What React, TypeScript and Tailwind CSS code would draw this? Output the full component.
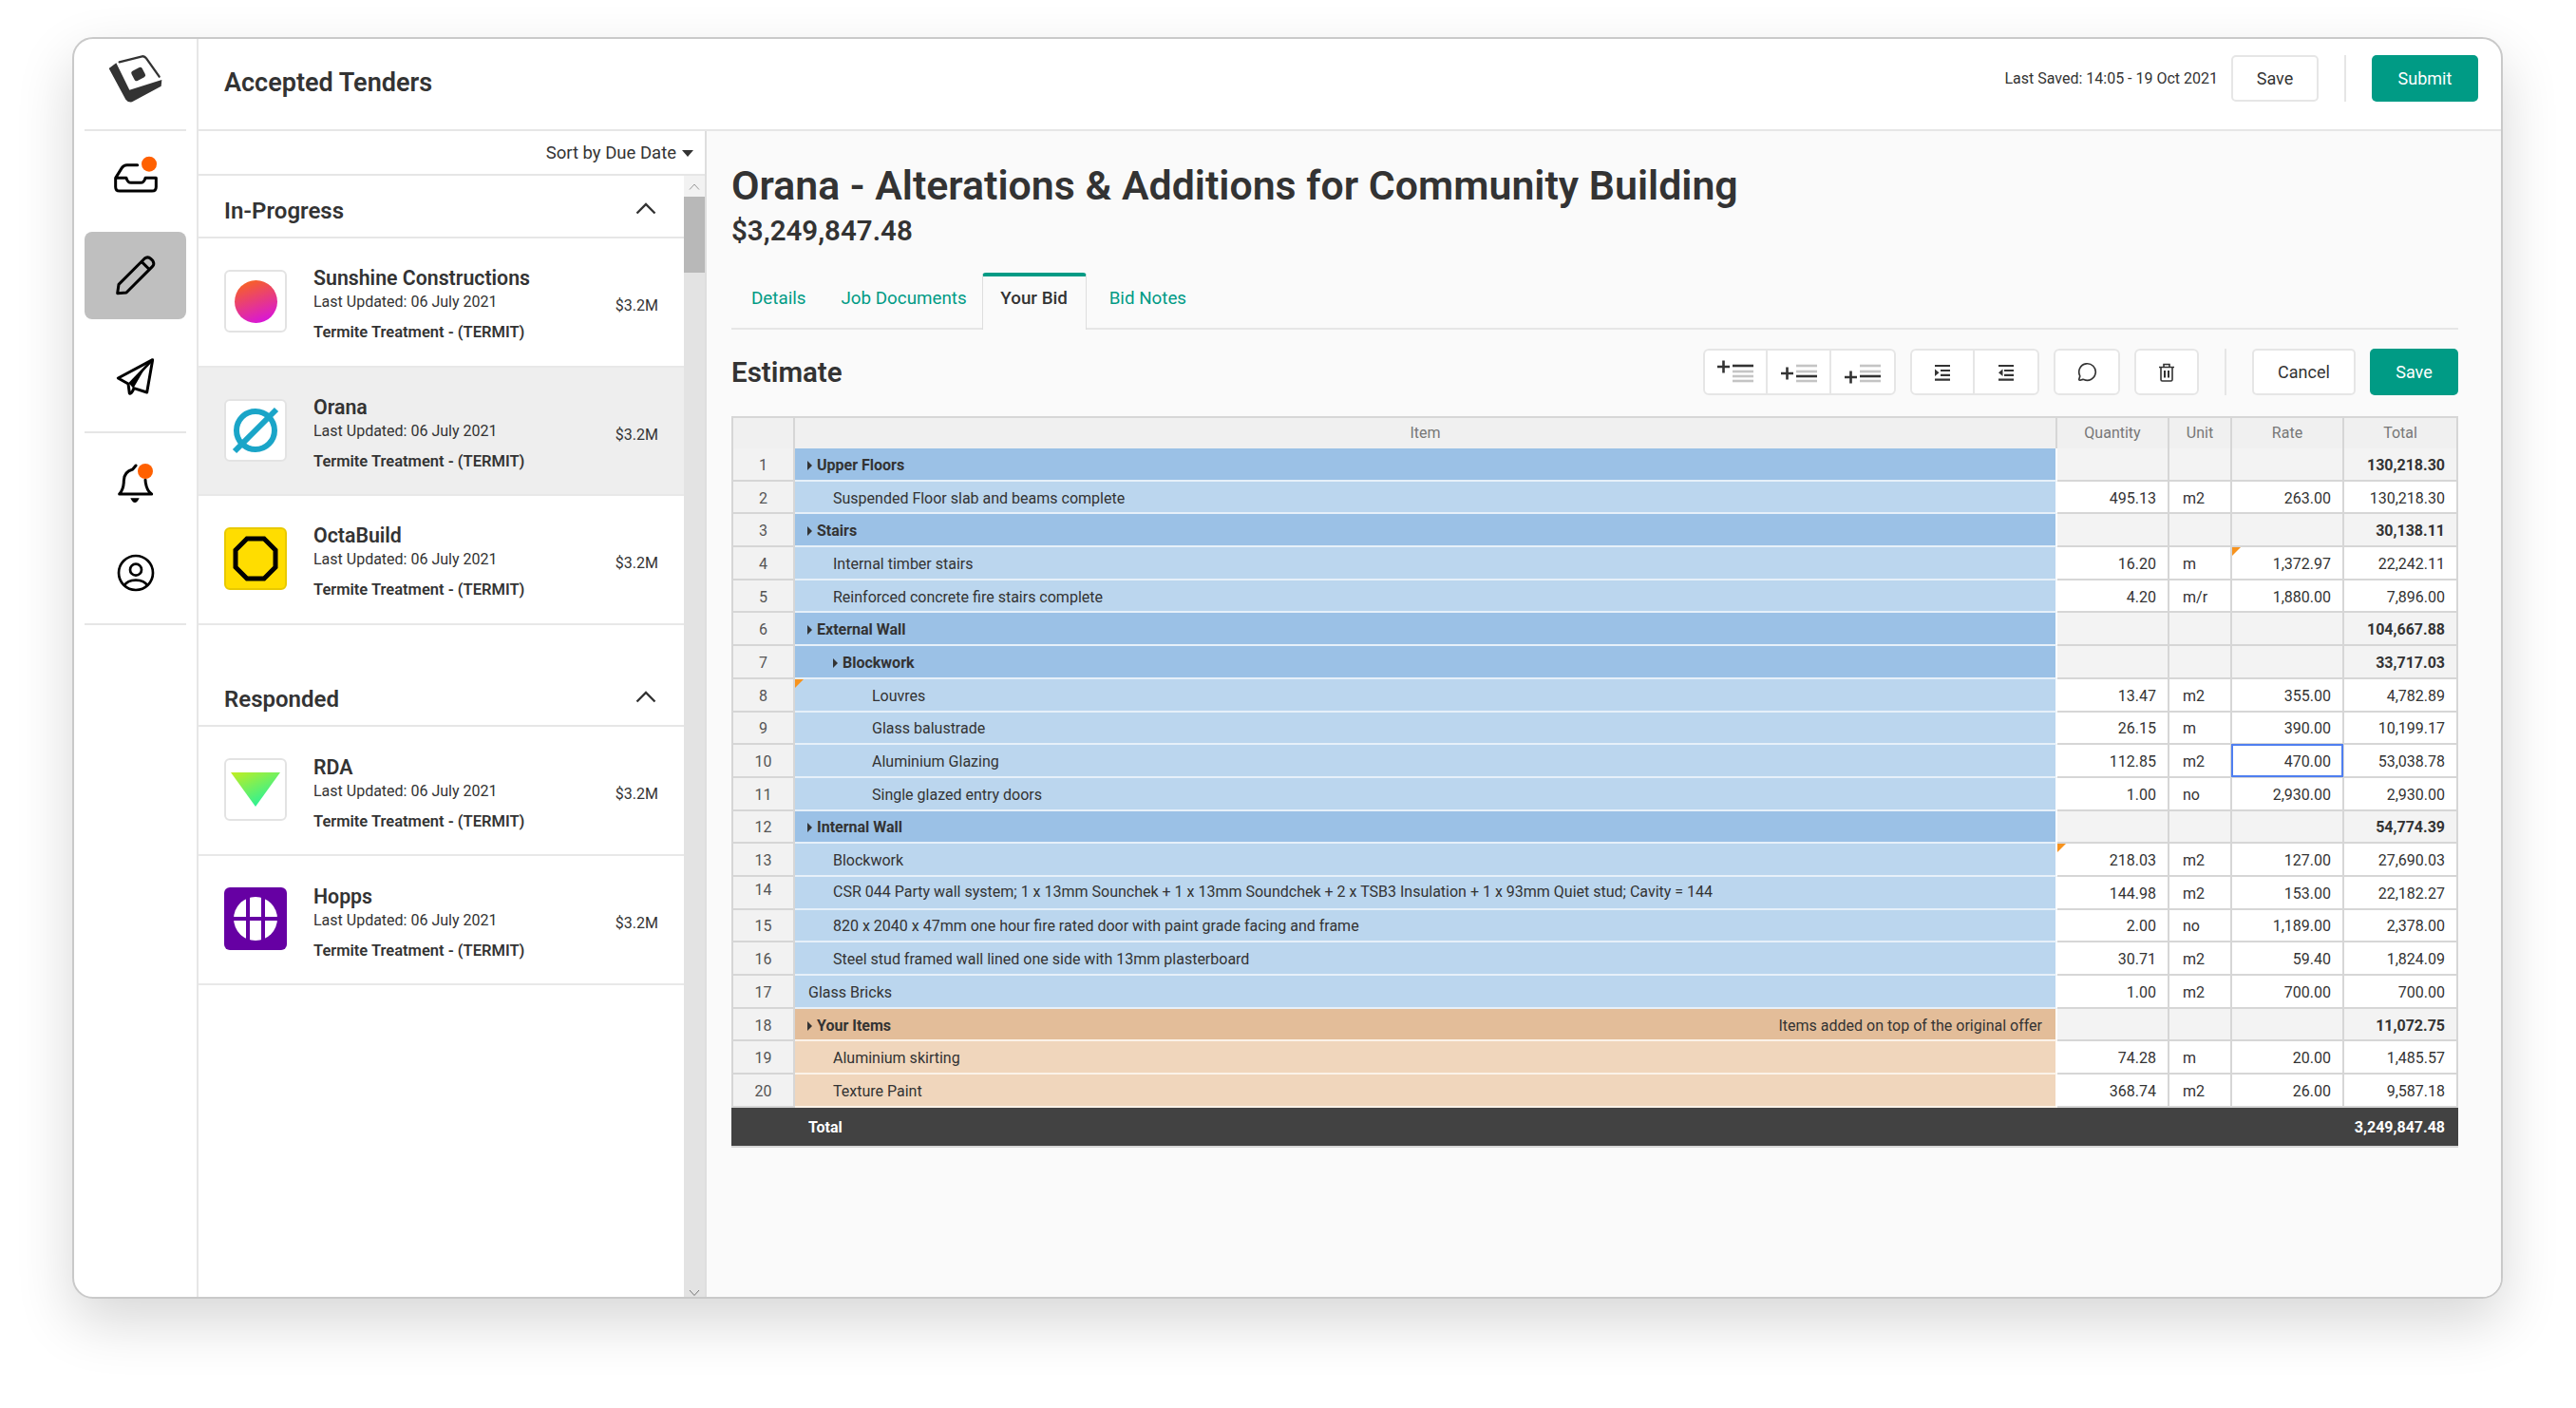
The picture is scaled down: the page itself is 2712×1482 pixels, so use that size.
import { MessageCircle } from "lucide-react"

interface Row {
  n: number
  label: string
  level?: number
  group?: boolean
  orange?: boolean
  qty?: string
  unit?: string
  rate?: string
  total: string
  note?: string
  flag?: "item" | "qty" | "rate"
  selected?: boolean
}

const rows: Row[] = [
  { n: 1, label: "Upper Floors", group: true, total: "130,218.30" },
  { n: 2, label: "Suspended Floor slab and beams complete", level: 1, qty: "495.13", unit: "m2", rate: "263.00", total: "130,218.30" },
  { n: 3, label: "Stairs", group: true, total: "30,138.11" },
  { n: 4, label: "Internal timber stairs", level: 1, qty: "16.20", unit: "m", rate: "1,372.97", total: "22,242.11", flag: "rate" },
  { n: 5, label: "Reinforced concrete fire stairs complete", level: 1, qty: "4.20", unit: "m/r", rate: "1,880.00", total: "7,896.00" },
  { n: 6, label: "External Wall", group: true, total: "104,667.88" },
  { n: 7, label: "Blockwork", group: true, level: 1, total: "33,717.03" },
  { n: 8, label: "Louvres", level: 2, qty: "13.47", unit: "m2", rate: "355.00", total: "4,782.89", flag: "item" },
  { n: 9, label: "Glass balustrade", level: 2, qty: "26.15", unit: "m", rate: "390.00", total: "10,199.17" },
  { n: 10, label: "Aluminium Glazing", level: 2, qty: "112.85", unit: "m2", rate: "470.00", total: "53,038.78", selected: true },
  { n: 11, label: "Single glazed entry doors", level: 2, qty: "1.00", unit: "no", rate: "2,930.00", total: "2,930.00" },
  { n: 12, label: "Internal Wall", group: true, total: "54,774.39" },
  { n: 13, label: "Blockwork", level: 1, qty: "218.03", unit: "m2", rate: "127.00", total: "27,690.03", flag: "qty" },
  { n: 14, label: "CSR 044 Party wall system; 1 x 13mm Sounchek + 1 x 13mm Soundchek + 2 x TSB3 Insulation + 1 x 93mm Quiet stud; Cavity = 144", level: 1, qty: "144.98", unit: "m2", rate: "153.00", total: "22,182.27" },
  { n: 15, label: "820 x 2040 x 47mm one hour fire rated door with paint grade facing and frame", level: 1, qty: "2.00", unit: "no", rate: "1,189.00", total: "2,378.00" },
  { n: 16, label: "Steel stud framed wall lined one side with 13mm plasterboard", level: 1, qty: "30.71", unit: "m2", rate: "59.40", total: "1,824.09" },
  { n: 17, label: "Glass Bricks", level: 0, qty: "1.00", unit: "m2", rate: "700.00", total: "700.00" },
  { n: 18, label: "Your Items", group: true, orange: true, total: "11,072.75", note: "Items added on top of the original offer" },
  { n: 19, label: "Aluminium skirting", level: 1, orange: true, qty: "74.28", unit: "m", rate: "20.00", total: "1,485.57" },
  { n: 20, label: "Texture Paint", level: 1, orange: true, qty: "368.74", unit: "m2", rate: "26.00", total: "9,587.18" },
]

function Flag() {
  return (
    <svg width="9" height="9" viewBox="0 0 9 9" className="absolute left-0 top-0">
      <path d="M0 0H9L0 9Z" fill="#f7931e" />
    </svg>
  )
}

function Caret() {
  return (
    <svg width="5" height="10" viewBox="0 0 5 10" className="mr-[5px] shrink-0">
      <path d="M0 0L5 5L0 10Z" fill="#333333" />
    </svg>
  )
}

function NumCell({ children, bold, gray, flag, selected, left }: { children?: React.ReactNode; bold?: boolean; gray?: boolean; flag?: boolean; selected?: boolean; left?: boolean }) {
  return (
    <div className={`relative flex items-center pt-[3px] border-r-2 border-b-2 border-[#d6d6d6] ${left ? "justify-start pl-[14px]" : "justify-end pr-[12px]"} ${gray ? "bg-[#f3f3f3]" : "bg-white"} ${bold ? "font-bold" : ""}`}>
      {flag && <Flag />}
      {children}
      {selected && <div className="absolute -left-[1px] -top-[1px] -right-[1px] -bottom-[1px] border-[2px] border-[#4f7ff0]" />}
    </div>
  )
}

function TableRow({ row }: { row: Row }) {
  const level = row.level ?? 0
  const bg = row.group
    ? row.orange ? "bg-[#e3bd99]" : "bg-[#9bc1e6]"
    : row.orange ? "bg-[#f0d6bc]" : "bg-[#bbd6ee]"
  const pad = row.group
    ? level === 1 ? "pl-[40px]" : "pl-[13px]"
    : level === 2 ? "pl-[81px]" : level === 1 ? "pl-[40px]" : "pl-[14px]"
  return (
    <div className="grid grid-cols-[67px_1329px_118px_66px_118px_120px] h-[34.7px]">
      <div className={`flex items-center justify-center bg-[#f2f2f2] border-l-2 border-r-2 border-b-2 border-[#d6d6d6] text-[#555555] ${row.n === 14 ? "pb-[5px]" : "pt-[3px]"}`}>
        {row.n}
      </div>
      <div className={`relative flex items-center justify-between pr-[14px] border-b-2 border-r-2 border-r-white ${row.orange ? "border-b-[#fbf2e8]" : "border-b-[#e6f0f9]"} ${bg} ${pad} ${row.group ? "font-bold" : ""} ${row.n === 14 ? "pb-[1px]" : "pt-[3px]"}`}>
        {row.flag === "item" && <Flag />}
        <div className="flex items-center">
          {row.group && <Caret />}
          <span className="whitespace-nowrap">{row.label}</span>
        </div>
        {row.note && <span className="font-normal">{row.note}</span>}
      </div>
      <NumCell gray={row.group} flag={row.flag === "qty"}>{row.qty}</NumCell>
      <NumCell gray={row.group} left>{row.unit}</NumCell>
      <NumCell gray={row.group} flag={row.flag === "rate"} selected={row.selected}>{row.rate}</NumCell>
      <NumCell gray={row.group} bold={row.group}>{row.total}</NumCell>
    </div>
  )
}

function Logo() {
  return (
    <svg width="60" height="54" viewBox="40 15 180 160">
      <path d="M45 62L68 45L110 130L212 98L210 118L118 168Q105 170 98 160Z" fill="#333333" />
      <path d="M78 42L150 24Q158 23 163 30L204 88" fill="none" stroke="#333333" strokeWidth="7" strokeLinecap="round" />
      <rect x="119" y="63" width="38" height="34" rx="7" transform="rotate(-28 138 80)" fill="#333333" />
    </svg>
  )
}

function InboxIcon() {
  return (
    <svg width="60" height="60" viewBox="40 340 180 180" className="overflow-visible">
      <path d="M135 381H102Q92 381 86 390L66 422V450Q66 463 79 463H181Q194 463 194 450V422H160Q156 437 145 437H115Q104 437 100 422H66" fill="none" stroke="#000000" strokeWidth="9" strokeLinejoin="round" strokeLinecap="round" />
      <circle cx="172" cy="378" r="24" fill="#ff6000" />
    </svg>
  )
}

function PencilIcon() {
  return (
    <svg width="60" height="60" viewBox="40 2 180 180">
      <path d="M72 148L76 120L158 38Q168 30 178 40L184 46Q190 56 182 64L100 146Z" fill="none" stroke="#000000" strokeWidth="9" strokeLinejoin="round" />
      <path d="M148 48L174 74" stroke="#000000" strokeWidth="9" />
    </svg>
  )
}

function SendIcon() {
  return (
    <svg width="60" height="60" viewBox="40 316 180 180">
      <path d="M183 354L74 412L106 430L110 460Q116 464 124 444L165 457Z" fill="none" stroke="#000000" strokeWidth="9" strokeLinejoin="round" />
      <path d="M183 354L110 430" stroke="#000000" strokeWidth="8" />
      <path d="M158 382L110 430L122 444Z" fill="#000000" />
    </svg>
  )
}

function BellIcon() {
  return (
    <svg width="60" height="60" viewBox="40 24 180 180" className="overflow-visible">
      <path d="M78 150H180Q162 138 160 105M78 150Q92 135 92 108Q92 80 120 72L130 60" fill="none" stroke="#000000" strokeWidth="9" strokeLinecap="round" strokeLinejoin="round" />
      <path d="M113 163H141Q135 177 127 177Q119 177 113 163Z" fill="#000000" />
      <circle cx="160" cy="78" r="24" fill="#ff6000" />
    </svg>
  )
}

function UserIcon() {
  return (
    <svg width="60" height="60" viewBox="37 307 180 180">
      <circle cx="127" cy="397" r="54" fill="none" stroke="#000000" strokeWidth="8" />
      <circle cx="127" cy="387" r="18" fill="none" stroke="#000000" strokeWidth="8" />
      <path d="M90 438Q100 420 127 420Q154 420 164 438" fill="none" stroke="#000000" strokeWidth="8" />
    </svg>
  )
}

function AddIcon({ dark, plusY }: { dark: number; plusY: number }) {
  const ys = [8, 14, 19, 24]
  return (
    <svg width="40" height="30" viewBox="0 0 40 30">
      <path d={`M1 ${plusY}H14M7.5 ${plusY - 6.5}V${plusY + 6.5}`} stroke="#333333" strokeWidth="2.6" />
      {ys.map((y, i) => (
        <path key={y} d={`M17 ${y}H39`} stroke={i === dark ? "#333333" : "#c4c4c4"} strokeWidth="2.6" />
      ))}
    </svg>
  )
}

function IndentIcon({ out }: { out?: boolean }) {
  return (
    <svg width="18" height="18" viewBox="0 0 18 18">
      <path d="M1 2H17M1 16.6H17M7 7H17M7 11.8H17" stroke="#333333" strokeWidth="2.2" />
      <path d={out ? "M5.5 5.5V13L1 9.2Z" : "M1 5.5V13L5.5 9.2Z"} fill="#333333" />
    </svg>
  )
}

function TrashIcon() {
  return (
    <svg width="18" height="20" viewBox="0 0 18 20" fill="none" stroke="#333333" strokeWidth="1.6">
      <path d="M1 4.5H17M6 4.5V1.5H12V4.5M3 4.5V17.5Q3 19 4.5 19H13.5Q15 19 15 17.5V4.5" />
      <path d="M7 8V15.5M11 8V15.5" strokeWidth="2" />
    </svg>
  )
}

function Chevron() {
  return (
    <svg width="22" height="13" viewBox="0 0 22 13">
      <path d="M1.5 11.5L11 2L20.5 11.5" fill="none" stroke="#333333" strokeWidth="2.4" />
    </svg>
  )
}

function SectionHead({ title }: { title: string }) {
  return (
    <div className="flex items-center justify-between h-[66px] pt-[4px] pl-[27px] pr-[29px] border-b-2 border-[#e6e6e6] text-[24px] font-semibold text-[#333333]">
      <span className="pt-[5px]">{title}</span>
      <Chevron />
    </div>
  )
}

function Card({ name, logo, selected, logoClass, tall }: { name: string; logo: React.ReactNode; selected?: boolean; logoClass: string; tall?: boolean }) {
  return (
    <div className={`flex ${tall ? "h-[136px]" : "h-[135.7px]"} pl-[27px] pr-[27px] border-b-2 border-[#e8e8e8] ${selected ? "bg-[#eeeeee]" : "bg-white"}`}>
      <div className={`flex items-center justify-center w-[66px] h-[66px] mt-[33px] rounded-[6px] shrink-0 ${logoClass}`}>{logo}</div>
      <div className={`ml-[28px] ${tall ? "pt-[31px]" : "pt-[30px]"} flex-1 text-[#333333]`}>
        <div className="text-[21.3px] font-semibold leading-[24px]">{name}</div>
        <div className="text-[16px] leading-[24px] mt-[1px]">Last Updated: 06 July 2021</div>
        <div className="text-[16.5px] font-semibold leading-[24px] mt-[8px]">Termite Treatment - (TERMIT)</div>
      </div>
      <div className="pt-[59px] text-[16px] leading-[24px] text-[#333333]">$3.2M</div>
    </div>
  )
}

export default function App() {
  return (
    <div className="w-[2712px] h-[1482px] bg-white pl-[76px] pt-[39px] overflow-hidden font-['Roboto',sans-serif] text-[#333333]">
      <div className="flex w-[2559px] h-[1328px] bg-white border-2 border-[#c9c9c9] rounded-[22px] overflow-hidden shadow-[0_24px_60px_rgba(0,0,0,0.16)]">

        {/* SIDEBAR */}
        <div className="w-[131px] shrink-0 border-r-2 border-[#e6e6e6] pl-[11px]">
          <div className="w-[107px]">
            <div className="flex items-center justify-center h-[97px] border-b-2 border-[#e6e6e6] pb-[12px]">
              <Logo />
            </div>
            <div className="flex items-center justify-center h-[92px] mt-[6px]"><InboxIcon /></div>
            <div className="flex items-center justify-center h-[92px] mt-[8px] rounded-[8px] bg-[#bfbfbf]"><PencilIcon /></div>
            <div className="flex items-center justify-center h-[92px] mt-[14px]"><SendIcon /></div>
            <div className="h-[2px] mt-[12px] bg-[#e6e6e6]" />
            <div className="flex items-center justify-center h-[92px] mt-[6px]"><BellIcon /></div>
            <div className="flex items-center justify-center h-[92px] mt-[3px]"><UserIcon /></div>
            <div className="h-[2px] mt-[7px] bg-[#e6e6e6]" />
          </div>
        </div>

        <div className="flex-1 flex flex-col min-w-0">
          {/* HEADER */}
          <div className="flex items-start h-[97px] pl-[27px] pr-[24px] border-b-2 border-[#e6e6e6] shrink-0">
            <h1 className="text-[27px] font-semibold flex-1 leading-[36px] mt-[28px]">Accepted Tenders</h1>
            <div className="flex items-center mt-[17px]">
              <span className="text-[16px] mr-[14px]">Last Saved: 14:05 - 19 Oct 2021</span>
              <button className="w-[92px] h-[49px] rounded-[5px] border-2 border-[#e6e6e6] bg-white text-[18px]">Save</button>
              <div className="w-[2px] h-[49px] bg-[#e6e6e6] mx-[27px]" />
              <button className="w-[112px] h-[49px] rounded-[5px] bg-[#009b85] text-white text-[18px]">Submit</button>
            </div>
          </div>

          <div className="flex flex-1 min-h-0">
            {/* TENDER LIST */}
            <div className="w-[535px] shrink-0 flex flex-col border-r-2 border-[#dedede]">
              <div className="flex items-center justify-end h-[47px] pt-[2px] pr-[12px] border-b-2 border-[#e6e6e6] text-[18.5px] shrink-0">
                Sort by Due Date
                <svg width="12" height="7" viewBox="0 0 12 7" className="ml-[6px]"><path d="M0 0H12L6 7Z" fill="#333333" /></svg>
              </div>
              <div className="flex flex-1 min-h-0">
                <div className="w-[511px] shrink-0">
                  <SectionHead title="In-Progress" />
                  <Card
                    name="Sunshine Constructions"
                    logoClass="bg-white border-2 border-[#e3e3e3]"
                    logo={<div className="w-[45px] h-[45px] rounded-full bg-[linear-gradient(160deg,#fb6a10,#d40cf0)]" />}
                  />
                  <Card
                    name="Orana"
                    selected
                    logoClass="bg-white border-2 border-[#e3e3e3]"
                    logo={
                      <svg width="52" height="52" viewBox="0 0 52 52">
                        <circle cx="26" cy="26" r="20" fill="none" stroke="#1aa5c8" strokeWidth="6" />
                        <path d="M4 48L48 4" stroke="#1aa5c8" strokeWidth="6" />
                      </svg>
                    }
                  />
                  <Card
                    name="OctaBuild"
                    logoClass="bg-[#ffdd00] border-2 border-[#e8c900]"
                    logo={
                      <svg width="48" height="48" viewBox="0 0 48 48">
                        <path d="M15 3H33L45 15V33L33 45H15L3 33V15Z" fill="none" stroke="#000000" strokeWidth="5" />
                      </svg>
                    }
                  />
                  <div className="h-[41px]" />
                  <SectionHead title="Responded" />
                  <Card
                    name="RDA"
                    tall
                    logoClass="bg-white border-2 border-[#e3e3e3]"
                    logo={
                      <svg width="52" height="36" viewBox="0 0 52 36">
                        <defs>
                          <linearGradient id="rda" x1="0" y1="0" x2="0.7" y2="1">
                            <stop offset="0" stopColor="#c2ee20" />
                            <stop offset="1" stopColor="#1ff2a0" />
                          </linearGradient>
                        </defs>
                        <path d="M0 0H52L26 36Z" fill="url(#rda)" />
                      </svg>
                    }
                  />
                  <Card
                    name="Hopps"
                    tall
                    logoClass="bg-[#6600a3]"
                    logo={
                      <svg width="46" height="46" viewBox="0 0 46 46">
                        <circle cx="23" cy="23" r="23" fill="#ffffff" />
                        <path d="M15 0V46M31 0V46M0 23H46" stroke="#6600a3" strokeWidth="4" />
                      </svg>
                    }
                  />
                </div>
                {/* scrollbar */}
                <div className="w-[22px] flex flex-col bg-[#e3e3e3] shrink-0">
                  <div className="flex items-center justify-center h-[22px] bg-[#f2f2f2]">
                    <svg width="12" height="7" viewBox="0 0 12 7"><path d="M1 6.5L6 1L11 6.5" fill="none" stroke="#999999" /></svg>
                  </div>
                  <div className="h-[80px] bg-[#b8b8b8]" />
                  <div className="flex-1" />
                  <div className="flex items-center justify-center h-[10px]">
                    <svg width="12" height="7" viewBox="0 0 12 7"><path d="M1 1L6 6.5L11 1" fill="none" stroke="#777777" /></svg>
                  </div>
                </div>
              </div>
            </div>

            {/* MAIN */}
            <div className="flex-1 min-w-0 bg-[#fafafa] pl-[26px] pr-[45px] pt-[28px]">
              <h2 className="text-[42.85px] font-semibold leading-[59px]">Orana - Alterations &amp; Additions for Community Building</h2>
              <div className="text-[29.5px] font-semibold leading-[36px]">$3,249,847.48</div>

              <div className="flex items-stretch h-[60px] mt-[26px] border-b-2 border-[#e6e6e6] text-[18.8px] text-[#009b85]">
                <div className="pl-[21px] pt-[13px]">Details</div>
                <div className="ml-[37px] pt-[13px]">Job Documents</div>
                <div className="ml-[16px] w-[110px] h-[60px] flex justify-center pt-[9px] bg-[#fafafa] border-t-4 border-t-[#009b85] border-x border-x-[#dedede] rounded-t-[4px] font-medium text-[#333333]">Your Bid</div>
                <div className="ml-[24px] pt-[13px]">Bid Notes</div>
              </div>

              <div className="flex items-center h-[49px] mt-[20px]">
                <h3 className="text-[29.5px] font-semibold flex-1 pt-[2px]">Estimate</h3>
                <div className="flex h-[49px] rounded-[6px] border-2 border-[#e6e6e6] bg-white divide-x-2 divide-[#e6e6e6]">
                  <div className="flex items-center justify-center w-[66.3px]"><AddIcon dark={0} plusY={9} /></div>
                  <div className="flex items-center justify-center w-[66.3px]"><AddIcon dark={2} plusY={16} /></div>
                  <div className="flex items-center justify-center w-[66.3px]"><AddIcon dark={2} plusY={20} /></div>
                </div>
                <div className="flex h-[49px] ml-[15px] rounded-[6px] border-2 border-[#e6e6e6] bg-white divide-x-2 divide-[#e6e6e6]">
                  <div className="flex items-center justify-center w-[66px]"><IndentIcon /></div>
                  <div className="flex items-center justify-center w-[66px]"><IndentIcon out /></div>
                </div>
                <div className="flex items-center justify-center w-[70px] h-[49px] ml-[15px] rounded-[6px] border-2 border-[#e6e6e6] bg-white">
                  <MessageCircle size={21} strokeWidth={1.9} color="#333333" />
                </div>
                <div className="flex items-center justify-center w-[68px] h-[49px] ml-[15px] rounded-[6px] border-2 border-[#e6e6e6] bg-white"><TrashIcon /></div>
                <div className="w-[2px] h-[49px] bg-[#e6e6e6] mx-[27px]" />
                <button className="w-[109px] h-[49px] rounded-[5px] border-2 border-[#e6e6e6] bg-white text-[18px]">Cancel</button>
                <button className="w-[93px] h-[49px] ml-[15px] rounded-[5px] bg-[#009b85] text-white text-[18px]">Save</button>
              </div>

              {/* ESTIMATE TABLE */}
              <div className="mt-[22px] w-[1818px] text-[16px]">
                <div className="grid grid-cols-[67px_1329px_118px_66px_118px_120px] h-[34px] bg-[#f0f0f0] border-t-2 border-[#d6d6d6] text-[#777777] text-center leading-[32px]">
                  <div className="border-l-2 border-r-2 border-b-2 border-[#d6d6d6]" />
                  <div className="border-r-2 border-b-2 border-[#d6d6d6]">Item</div>
                  <div className="border-r-2 border-b-2 border-[#d6d6d6]">Quantity</div>
                  <div className="border-r-2 border-b-2 border-[#d6d6d6]">Unit</div>
                  <div className="border-r-2 border-b-2 border-[#d6d6d6]">Rate</div>
                  <div className="border-r-2 border-b-2 border-[#d6d6d6]">Total</div>
                </div>
                {rows.map((r) => <TableRow key={r.n} row={r} />)}
                <div className="flex items-center justify-between h-[42px] pt-[2px] pl-[81px] pr-[14px] bg-[#424242] text-white font-bold border-b-2 border-[#d6d6d6]">
                  <span>Total</span>
                  <span>3,249,847.48</span>
                </div>
              </div>
            </div>
          </div>
        </div>
      </div>
    </div>
  )
}
